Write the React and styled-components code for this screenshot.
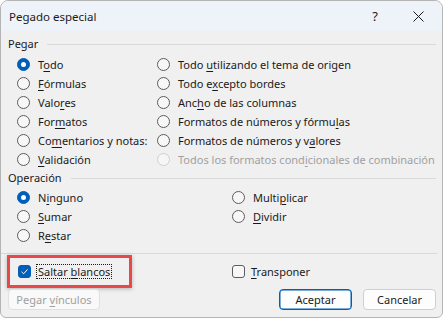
import React from "react";
import styled, { createGlobalStyle } from "styled-components";

const GlobalStyle = createGlobalStyle`
  html, body {
    margin: 0;
    padding: 0;
    background: #ffffff;
  }
  body {
    font-family: "Segoe UI", "Noto Sans", sans-serif;
  }
`;

const pasteLeft = [
  { pre: "T", key: "o", post: "do", checked: true },
  { pre: "", key: "F", post: "órmulas" },
  { pre: "Valo", key: "r", post: "es" },
  { pre: "For", key: "m", post: "atos" },
  { pre: "Co", key: "m", post: "entarios y notas:" },
  { pre: "", key: "V", post: "alidación" },
];

const pasteRight = [
  { pre: "Todo ", key: "u", post: "tilizando el tema de origen" },
  { pre: "Todo e", key: "x", post: "cepto bordes" },
  { pre: "Anc", key: "h", post: "o de las columnas" },
  { pre: "Formatos de números y fórmu", key: "l", post: "as" },
  { pre: "Formatos de números y v", key: "a", post: "lores" },
  { pre: "Todos los formatos cond", key: "i", post: "cionales de combinación", disabled: true },
];

const opLeft = [
  { pre: "N", key: "i", post: "nguno", checked: true },
  { pre: "", key: "S", post: "umar" },
  { pre: "R", key: "e", post: "star" },
];

const opRight = [
  { pre: "Multi", key: "p", post: "licar" },
  { pre: "", key: "D", post: "ividir" },
];

function Label({ item }) {
  return (
    <>
      {item.pre}
      <Key>{item.key}</Key>
      {item.post}
    </>
  );
}

function RadioItem({ item }) {
  return (
    <Option $disabled={item.disabled}>
      <Radio $checked={item.checked} $disabled={item.disabled} />
      <span>
        <Label item={item} />
      </span>
    </Option>
  );
}

function CheckMark() {
  return (
    <svg width="9" height="9" viewBox="0 0 9 9">
      <path d="M1.5 4.8 L3.6 6.8 L7.6 2.4" fill="none" stroke="#ffffff" strokeWidth="1" />
    </svg>
  );
}

function XIcon() {
  return (
    <svg width="11" height="11" viewBox="0 0 11 11">
      <path d="M0.5 0.5 L10.5 10.5 M10.5 0.5 L0.5 10.5" stroke="#1a1a1a" strokeWidth="1" />
    </svg>
  );
}

export default function App() {
  return (
    <>
      <GlobalStyle />
      <Dialog>
        <TitleBar>
          <Title>Pegado especial</Title>
          <Help>?</Help>
          <Close>
            <XIcon />
          </Close>
        </TitleBar>
        <Body>
          <GroupHeader $mt={5}>
            <span>Pegar</span>
            <Rule />
          </GroupHeader>
          <OptionGrid $col={140} $mt={3}>
            {pasteLeft.map((left, i) => (
              <React.Fragment key={i}>
                <RadioItem item={left} />
                <RadioItem item={pasteRight[i]} />
              </React.Fragment>
            ))}
          </OptionGrid>

          <GroupHeader $mt={1}>
            <span>Operación</span>
            <Rule />
          </GroupHeader>
          <OptionGrid $col={215} $mt={2}>
            {opLeft.map((left, i) => (
              <React.Fragment key={i}>
                <RadioItem item={left} />
                {opRight[i] ? <RadioItem item={opRight[i]} /> : <span />}
              </React.Fragment>
            ))}
          </OptionGrid>

          <Separator />

          <CheckRow>
            <Highlight>
              <CheckItem>
                <Checkbox $checked>
                  <CheckMark />
                </Checkbox>
                <FocusText>
                  Saltar <Key>b</Key>lancos
                </FocusText>
              </CheckItem>
            </Highlight>
            <CheckItem>
              <Checkbox />
              <span>
                <Key>T</Key>ransponer
              </span>
            </CheckItem>
          </CheckRow>

          <ButtonRow>
            <Button $width={92} disabled>
              Pegar <Key>v</Key>ínculos
            </Button>
            <Spacer />
            <Button $width={73} $primary>
              Aceptar
            </Button>
            <Button $width={73}>Cancelar</Button>
          </ButtonRow>
        </Body>
      </Dialog>
    </>
  );
}

const Dialog = styled.div`
  width: 443px;
  height: 318px;
  box-sizing: border-box;
  border: 1px solid #b4b4b4;
  border-radius: 8px 8px 6px 6px;
  background: #f0f0f0;
  overflow: hidden;
  display: flex;
  flex-direction: column;
  font-size: 11px;
  color: #1a1a1a;
`;

const TitleBar = styled.div`
  height: 30px;
  flex: none;
  display: flex;
  align-items: center;
  background: #eef3f9;
  padding-left: 8px;
`;

const Title = styled.div`
  flex: 1;
  font-size: 11.5px;
  color: #1a1a1a;
`;

const Help = styled.div`
  width: 20px;
  text-align: center;
  font-size: 13px;
  margin-right: 28px;
`;

const Close = styled.div`
  width: 11px;
  height: 11px;
  display: flex;
  margin-right: 18px;
`;

const Body = styled.div`
  flex: 1;
  display: flex;
  flex-direction: column;
  padding: 0 6px 0 7px;
`;

const GroupHeader = styled.div`
  height: 16px;
  margin-top: ${(p) => p.$mt}px;
  display: flex;
  align-items: center;
  gap: 9px;
  line-height: 16px;
`;

const Rule = styled.div`
  flex: 1;
  height: 1px;
  background: #d9d9d9;
`;

const OptionGrid = styled.div`
  margin-top: ${(p) => p.$mt}px;
  margin-left: 9px;
  display: grid;
  grid-template-columns: ${(p) => p.$col}px 1fr;
  grid-auto-rows: 19px;
`;

const Option = styled.div`
  display: flex;
  align-items: center;
  gap: 8px;
  white-space: nowrap;
  color: ${(p) => (p.$disabled ? "#a0a0a0" : "#1a1a1a")};
`;

const Radio = styled.span`
  width: 13px;
  height: 13px;
  box-sizing: border-box;
  border-radius: 50%;
  flex: none;
  position: relative;
  border: 1px solid
    ${(p) => (p.$checked ? "#005fb8" : p.$disabled ? "#d0d0d0" : "#5c5c5c")};
  background: ${(p) => (p.$checked ? "#005fb8" : p.$disabled ? "#f6f6f6" : "#f7f7f7")};

  &::after {
    content: "";
    display: ${(p) => (p.$checked ? "block" : "none")};
    position: absolute;
    left: 3px;
    top: 3px;
    width: 5px;
    height: 5px;
    border-radius: 50%;
    background: #ffffff;
  }
`;

const Key = styled.span`
  text-decoration: underline;
  text-underline-offset: 2px;
`;

const Separator = styled.div`
  height: 1px;
  background: #d9d9d9;
  margin: 8px -1px 0 -7px;
`;

const CheckRow = styled.div`
  height: 34px;
  display: flex;
  align-items: center;
`;

const Highlight = styled.div`
  width: 125px;
  height: 33px;
  box-sizing: border-box;
  border: 3px solid #e8474b;
  margin-left: -1px;
  padding-left: 8px;
  display: flex;
  align-items: center;
  box-shadow: 0 1px 4px rgba(0, 0, 0, 0.25);
  margin-right: 100px;
`;

const CheckItem = styled.div`
  display: flex;
  align-items: center;
  gap: 6px;
  white-space: nowrap;
`;

const Checkbox = styled.span`
  width: 13px;
  height: 13px;
  box-sizing: border-box;
  border-radius: 3px;
  flex: none;
  display: flex;
  align-items: center;
  justify-content: center;
  border: 1px solid ${(p) => (p.$checked ? "#005fb8" : "#5c5c5c")};
  background: ${(p) => (p.$checked ? "#005fb8" : "#f7f7f7")};
`;

const FocusText = styled.span`
  outline: 1px dotted #1a1a1a;
  outline-offset: 0;
  padding: 0 1px;
  line-height: 13px;
`;

const ButtonRow = styled.div`
  display: flex;
  align-items: center;
  gap: 11px;
  margin-top: 1px;
`;

const Spacer = styled.div`
  flex: 1;
`;

const Button = styled.button`
  width: ${(p) => p.$width}px;
  height: 21px;
  box-sizing: border-box;
  padding: 0;
  font-family: inherit;
  font-size: 11px;
  border-radius: 4px;
  background: ${(p) => (p.disabled ? "#f9f9f9" : "#fdfdfd")};
  color: ${(p) => (p.disabled ? "#a0a0a0" : "#1a1a1a")};
  border: 1px solid ${(p) => (p.$primary ? "#005fb8" : p.disabled ? "#e0e0e0" : "#d0d0d0")};
  box-shadow: ${(p) => (p.$primary ? "inset 0 0 0 0.5px #005fb8" : "none")};
`;
